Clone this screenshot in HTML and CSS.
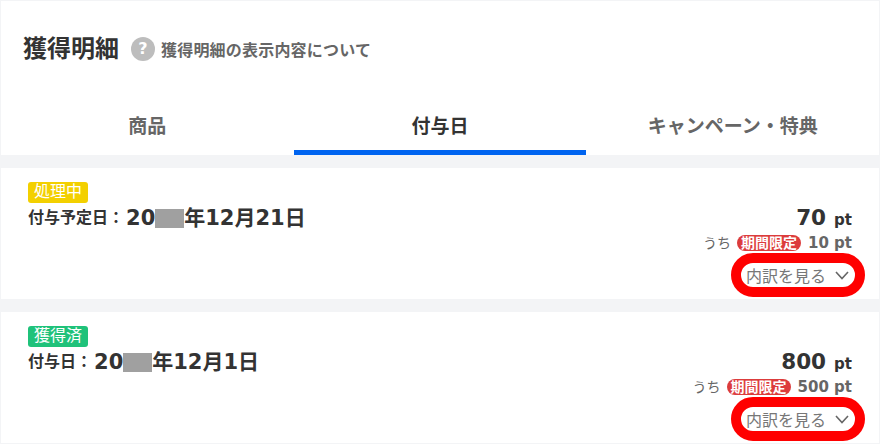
FILE: index.html
```html
<!DOCTYPE html>
<html lang="ja">
<head>
    <meta charset="UTF-8">
    <title>獲得明細</title>
    <link rel="stylesheet" href="styles.css">
</head>
<body>
    <div class="page">
        <header class="head">
            <div class="head-title">
                <h1>獲得明細</h1>
                <a class="help">
                    <span class="help-icon">?</span>
                    獲得明細の表示内容について
                </a>
            </div>
            <nav class="tabs">
                <div class="tab">商品</div>
                <div class="tab active">付与日</div>
                <div class="tab">キャンペーン・特典</div>
            </nav>
        </header>

        <section class="card">
            <div class="card-left">
                <span class="status processing">処理中</span>
                <p class="date"><span class="date-label">付与予定日：</span>20<span class="masked"></span>年12月21日</p>
            </div>
            <div class="card-right">
                <p class="total">70<span class="unit">pt</span></p>
                <p class="limited"><span class="uchi">うち</span><span class="limited-tag">期間限定</span><span class="limited-pt">10 pt</span></p>
                <button class="detail-btn">内訳を見る
                    <svg class="chevron" viewBox="0 0 14 9"><path d="M1 1 L7 7.5 L13 1"/></svg>
                </button>
            </div>
        </section>

        <section class="card">
            <div class="card-left">
                <span class="status done">獲得済</span>
                <p class="date"><span class="date-label">付与日：</span>20<span class="masked"></span>年12月1日</p>
            </div>
            <div class="card-right">
                <p class="total">800<span class="unit">pt</span></p>
                <p class="limited"><span class="uchi">うち</span><span class="limited-tag">期間限定</span><span class="limited-pt">500 pt</span></p>
                <button class="detail-btn">内訳を見る
                    <svg class="chevron" viewBox="0 0 14 9"><path d="M1 1 L7 7.5 L13 1"/></svg>
                </button>
            </div>
        </section>
    </div>
</body>
</html>
```

FILE: styles.css
```css
body {
    margin: 0;
    background-color: #f3f4f6;
    font-family: "DejaVu Sans", "Noto Sans CJK JP", sans-serif;
    color: #333;
    overflow: hidden;
}

p {
    margin: 0;
}

.page {
    display: flex;
    flex-direction: column;
    gap: 13px;
    margin: 1px 1px 0;
}

.head {
    background: white;
    height: 154px;
    display: flex;
    flex-direction: column;
    justify-content: space-between;
}

.head-title {
    display: flex;
    align-items: center;
    padding: 33px 0 0 22px;
}

.head-title h1 {
    margin: 0;
    font-size: 24px;
    line-height: 30px;
    font-weight: bold;
}

.help {
    display: flex;
    align-items: center;
    margin-left: 12px;
    font-size: 16px;
    letter-spacing: 0.2px;
    font-weight: bold;
    color: #666;
}

.help-icon {
    width: 24px;
    height: 24px;
    margin-right: 6px;
    border-radius: 50%;
    background: #bdbdbd;
    color: white;
    font-size: 16px;
    line-height: 24px;
    text-align: center;
}

.tabs {
    display: flex;
}

.tab {
    flex: 1;
    height: 55px;
    box-sizing: border-box;
    padding-top: 11px;
    font-size: 19px;
    line-height: 30px;
    font-weight: bold;
    text-align: center;
    color: #666;
}

.tab.active {
    color: #333;
    border-bottom: 5px solid #0064f0;
}

.card {
    background: white;
    height: 131px;
    box-sizing: border-box;
    padding: 14px 27px 0;
    display: flex;
    justify-content: space-between;
}

.status {
    display: block;
    width: 60px;
    height: 21px;
    border-radius: 3px;
    color: white;
    font-size: 16px;
    line-height: 19px;
    text-align: center;
}

.processing {
    background: #f3d000;
}

.done {
    background: #1fc27a;
}

.date {
    margin-top: 1px;
    font-size: 21px;
    line-height: 28px;
    font-weight: bold;
    display: flex;
    align-items: center;
}

.date-label {
    font-size: 16px;
    margin-right: 2px;
}

.masked {
    width: 29px;
    height: 19px;
    background: #a0a0a0;
}

.card-right {
    display: flex;
    flex-direction: column;
    align-items: flex-end;
}

.total {
    margin-top: 21px;
    height: 30px;
    font-size: 21.5px;
    line-height: 30px;
    font-weight: bold;
}

.unit {
    margin-left: 8px;
    font-size: 15px;
}

.limited {
    display: flex;
    align-items: center;
    height: 20px;
    font-size: 14px;
    line-height: 20px;
    font-weight: bold;
    color: #666;
}

.uchi {
    font-weight: normal;
}

.limited-tag {
    margin: 0 7px 0 6px;
    padding: 0 4px;
    border-radius: 8px;
    background: #dc3c3c;
    color: white;
    font-size: 14px;
    line-height: 16px;
}

.limited-pt {
    font-size: 15px;
}

.detail-btn {
    display: flex;
    align-items: center;
    width: 134px;
    height: 44px;
    box-sizing: border-box;
    margin: 0 -13px 0 0;
    padding: 0 0 0 5px;
    border: 10px solid #f00;
    border-radius: 22px;
    background: white;
    color: #777;
    font-family: inherit;
    font-size: 16px;
    white-space: nowrap;
}

.chevron {
    width: 14px;
    height: 9px;
    margin-left: 9px;
    fill: none;
    stroke: #666;
    stroke-width: 1.6;
}
```
